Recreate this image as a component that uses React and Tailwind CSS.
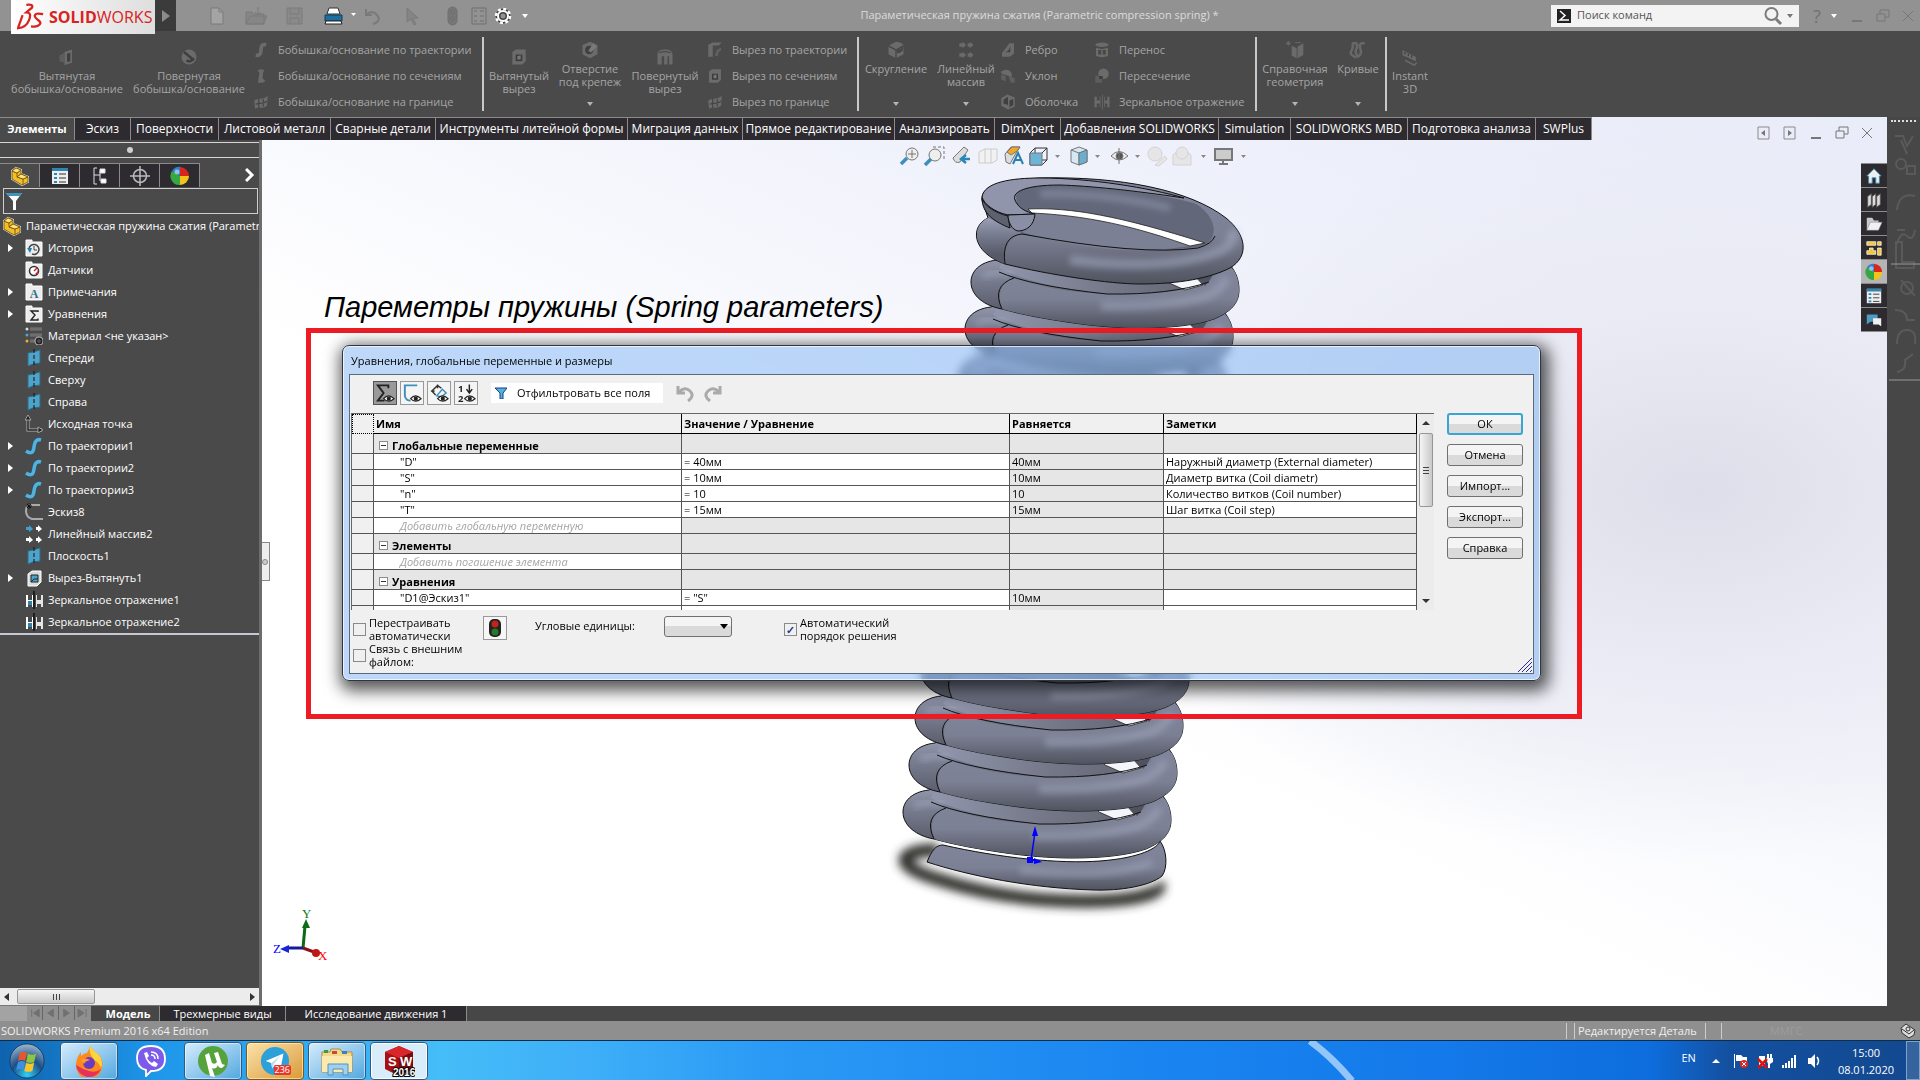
import clsx from "clsx";

const TABS = [
  { label: "Элементы", width: "w-[75px]", active: true },
  { label: "Эскиз", width: "w-[56px]" },
  { label: "Поверхности", width: "w-[88px]" },
  { label: "Листовой металл", width: "w-[112px]" },
  { label: "Сварные детали", width: "w-[105px]" },
  { label: "Инструменты литейной формы", width: "w-[192px]" },
  { label: "Миграция данных", width: "w-[115px]" },
  { label: "Прямое редактирование", width: "w-[152px]" },
  { label: "Анализировать", width: "w-[100px]" },
  { label: "DimXpert", width: "w-[66px]" },
  { label: "Добавления SOLIDWORKS", width: "w-[158px]" },
  { label: "Simulation", width: "w-[72px]" },
  { label: "SOLIDWORKS MBD", width: "w-[117px]" },
  { label: "Подготовка анализа", width: "w-[128px]" },
  { label: "SWPlus", width: "w-[56px]" },
];

const TREE = [
  { label: "История", icon: "history", open: true },
  { label: "Датчики", icon: "sensor" },
  { label: "Примечания", icon: "note", open: true },
  { label: "Уравнения", icon: "sigma", open: true },
  { label: "Материал <не указан>", icon: "material" },
  { label: "Спереди", icon: "plane" },
  { label: "Сверху", icon: "plane" },
  { label: "Справа", icon: "plane" },
  { label: "Исходная точка", icon: "origin" },
  { label: "По траектории1", icon: "sweep", open: true },
  { label: "По траектории2", icon: "sweep", open: true },
  { label: "По траектории3", icon: "sweep", open: true },
  { label: "Эскиз8", icon: "sketch" },
  { label: "Линейный массив2", icon: "pattern" },
  { label: "Плоскость1", icon: "plane" },
  { label: "Вырез-Вытянуть1", icon: "cut", open: true },
  { label: "Зеркальное отражение1", icon: "mirror" },
  { label: "Зеркальное отражение2", icon: "mirror" },
];

const ROWS = [
  { group: "Глобальные переменные" },
  { name: '"D"', value: "= 40мм", result: "40мм", note: "Наружный диаметр (External diameter)" },
  { name: '"S"', value: "= 10мм", result: "10мм", note: "Диаметр витка (Coil diametr)" },
  { name: '"n"', value: "= 10", result: "10", note: "Количество витков (Coil number)" },
  { name: '"T"', value: "= 15мм", result: "15мм", note: "Шаг витка (Coil step)" },
  { add: "Добавить глобальную переменную" },
  { group: "Элементы" },
  { add: "Добавить погашение элемента" },
  { group: "Уравнения" },
  { name: '"D1@Эскиз1"', value: '= "S"', result: "10мм", note: "" },
  { name: '"D2@Эскиз1"', value: '= "D"', result: "40мм", note: "" },
];

function Caret({ className = "text-white" }) {
  return (
    <svg viewBox="0 0 6 4" className={clsx("h-1 w-1.5 shrink-0", className)} fill="currentColor">
      <path d="M0 0h6L3 4z" />
    </svg>
  );
}

// Greyed out feature glyphs of the ribbon
const RIBBON_GLYPHS = {
  extrude: (
    <>
      <path d="M3 10l6-3v12l-6-2z" fill="#5d5d5d" />
      <path d="M9 6l9-3v16l-9 3z" />
      <path d="M12 8l4-1v10l-4 1z" fill="#3f3f3f" />
    </>
  ),
  revolve: (
    <>
      <circle cx="12" cy="12" r="9" />
      <path d="M6 6l12 10M9 16a5 5 0 0 0 8-3" stroke="#3f3f3f" strokeWidth="3" fill="none" />
    </>
  ),
  sweep: <path d="M5 19c6 1 7-3 7-8s2-7 7-6" stroke="#6b6b6b" strokeWidth="5" fill="none" />,
  loft: (
    <>
      <ellipse cx="12" cy="5" rx="4" ry="2" />
      <path d="M10 6h5l-1 9 4 4-4 2H8z" />
    </>
  ),
  boundary: (
    <>
      <path d="M3 10c5-4 10 0 18-6l-1 13c-6 5-12 1-16 4z" />
      <path d="M5 15c6-2 9 0 15-4M9 8v12M15 8v10" stroke="#444" strokeWidth="1.5" fill="none" />
    </>
  ),
  cut: (
    <>
      <path d="M4 6l4-3h12v14l-4 4H4z" />
      <path d="M8 9h8v8H8z" fill="#3c3c3c" />
      <path d="M10 11l4-1v5h-4z" fill="#777" />
    </>
  ),
  hole: (
    <>
      <path d="M12 2l9 4v11l-9 5-9-5V6z" />
      <circle cx="11" cy="12" r="5" fill="#404040" />
      <path d="M10 13l6-9 4 4-7 7z" fill="#7a7a7a" />
    </>
  ),
  draft: (
    <>
      <path d="M3 6q10-6 14 3v4L3 9z" />
      <path d="M3 10l6 2v7l-6-2zM12 11l9 4v6h-5z" fill="#5f5f5f" />
    </>
  ),
  shell: (
    <>
      <path d="M3 7l8-5 10 4v12l-9 4-9-5z" />
      <path d="M6 9l6-4v11l-6-2zM14 10l5-2v8l-5 3z" fill="#404040" />
    </>
  ),
  arch: (
    <>
      <path d="M3 21V9q0-6 9-6t9 6v12h-4V11h-2v10h-4V11H8v10z" />
      <path d="M5 7q7-3 14 0" stroke="#4a4a4a" strokeWidth="1.5" fill="none" />
    </>
  ),
  refGeometry: (
    <>
      <path d="M8 7l6 3v12l-6-3zM15 8l7-4v14l-7 4z" />
      <path d="M4 1v6M1 4h6M2 2l4 4M6 2L2 6M12 3h7" stroke="#6b6b6b" fill="none" />
    </>
  ),
  cutSweep: (
    <>
      <path d="M3 5l6-3h12l-4 4H9v15H3z" />
      <path d="M12 20q0-9 8-11v4q-4 1-4 7z" fill="#5f5f5f" />
    </>
  ),
  fillet: (
    <>
      <path d="M12 2q9 1 9 5v10l-9 5-9-5V7z" />
      <path d="M12 12v10M3 7l9 5 9-5" stroke="#444" strokeWidth="1.5" fill="none" />
      <path d="M13 12q6-1 8-5l-1 6q-3 3-7 3z" fill="#474747" />
    </>
  ),
  pattern: (
    <path d="M4 4h4V2l4 4-4 4V8H4zM14 4h3V2l4 4-4 4V8h-3zM4 16h4v-2l4 4-4 4v-2H4zM14 16h3v-2l4 4-4 4v-2h-3z" />
  ),
  rib: (
    <>
      <path d="M4 16L14 3h6v14l-6 4H4z" />
      <path d="M8 15q6-1 7-9v9z" fill="#424242" />
    </>
  ),
  wrap: (
    <>
      <ellipse cx="12" cy="5" rx="9" ry="3" />
      <path d="M4 9q8 3 16 0v11q-8 3-16 0z" />
      <path d="M7 12h4v6H7zM13 12h4v6h-4z" fill="#474747" />
    </>
  ),
  intersect: (
    <>
      <path d="M3 12h9v9H3z" fill="#5d5d5d" />
      <circle cx="14" cy="9" r="7" />
      <path d="M8 12h5v4H8z" fill="#3f3f3f" />
    </>
  ),
  mirror: <path d="M2 5h3v5h4V5h1v14H9v-5H5v5H2zM12 2h1v20h-1zM15 5h1v5h3V5h3v14h-3v-5h-3v5h-1z" />,
  curves: (
    <path d="M5 4h5q2 3 0 7t2 9q5-3 3-9t1-7h4M5 4q2 4-1 9t6 8" stroke="#686868" strokeWidth="3" fill="none" />
  ),
  instant: (
    <>
      <path d="M3 4l16 8v5L3 10z" />
      <path d="M6 6v3M10 8v3M14 10v3" stroke="#3f3f3f" strokeWidth="1.5" />
      <path d="M6 16l11 6 3-3" stroke="#686868" strokeWidth="2" fill="none" />
    </>
  ),
};

function Glyph({ name, className = "size-5" }) {
  return (
    <svg viewBox="0 0 24 24" className={clsx("shrink-0", className)} fill="#6b6b6b">
      {RIBBON_GLYPHS[name]}
    </svg>
  );
}

function BigButton({ glyph, lines, width, caret }) {
  return (
    <button
      type="button"
      className={clsx("flex shrink-0 flex-col items-center", width, caret ? "pt-[3px]" : "pt-2.5")}
    >
      <Glyph name={glyph} />
      <span className="mt-0.5 flex h-[26px] flex-col leading-[13px] whitespace-nowrap">
        {lines.map((l) => (
          <span key={l}>{l}</span>
        ))}
      </span>
      {caret && <Caret className="mt-3.5 text-[#b4b4b4]" />}
    </button>
  );
}

function ButtonColumn({ items, width }) {
  return (
    <div className={clsx("flex shrink-0 flex-col", width)}>
      {items.map(([glyph, label]) => (
        <button key={label} type="button" className="flex h-[26px] shrink-0 items-center gap-2 whitespace-nowrap">
          <Glyph name={glyph} className="size-[18px]" />
          {label}
        </button>
      ))}
    </div>
  );
}

function TitleBar() {
  return (
    <header className="relative z-10 flex h-[31px] items-center bg-[#929292] text-[11px]">
      <div className="ml-[11px] flex h-[34px] w-[144px] shrink-0 items-center gap-1 self-start bg-gradient-to-r from-white to-[#dedede] pl-1.5">
        <svg viewBox="0 0 30 30" className="h-[30px] w-[28px] shrink-0" fill="none" stroke="#d8231f" strokeWidth="2.4">
          <path d="M10 2q8-1 6 3l-6 5q6 0 3 8-3 8-12 9l5-14" />
          <path d="M28 12q-9-2-9 2c0 4 7 4 6 8q-2 4-10 3" />
        </svg>
        <span className="text-[16px] text-[#d8231f]">
          <b>SOLID</b>WORKS
        </span>
      </div>
      <button type="button" aria-label="Меню" className="flex h-[31px] w-[21px] shrink-0 items-center justify-center bg-[#3b3b3b]">
        <svg viewBox="0 0 8 12" className="h-3 w-2" fill="#8b8b8b">
          <path d="M0 0l8 6-8 6z" />
        </svg>
      </button>
      <div className="ml-8 flex shrink-0 items-center">
        <svg viewBox="0 0 220 20" className="h-5 w-[220px]" fill="none" stroke="#7a7a7a">
          <path d="M3 2h8l4 4v12H3z" fill="#a4a4a4" />
          <path d="M11 2v4h4" />
          <path d="M38 6h6l2 2h10v10H38zM38 18l4-8h17l-4 8z" fill="#868686" />
          <path d="M50 1v8m-3-3l3 3 3-3" />
          <path d="M79 2h15v16H79z" fill="#8a8a8a" />
          <path d="M82 2v6h9V2M82 18v-6h9v6" />
          <path d="M121 2h9l2 6h-13z" fill="#fff" stroke="#333" />
          <path d="M117 9h17v6h-17z" fill="#1e6fa0" stroke="#123c58" />
          <path d="M118 15h15l1 3h-17z" fill="#fff" stroke="#222" />
          <path d="M143 7h5l-2.500 3z" fill="#fff" stroke="none" />
          <path d="M158 3v6h6M158 9q6-6 11 0t-4 9" strokeWidth="2" />
          <path d="M199 2v14l4-3 3 6 2-1-3-6h5z" fill="#858585" />
        </svg>
        <svg viewBox="0 0 90 20" className="ml-1 h-5 w-[90px]" fill="none" stroke="#6f6f6f">
          <rect x="16" y="1" width="9" height="18" rx="4.500" fill="#777" />
          <circle cx="20.500" cy="6" r="2" />
          <circle cx="20.500" cy="13" r="2" />
          <path d="M40 2h14v16H40zM42 5h3M42 10h3M42 15h3M48 5h4M48 10h4M48 15h4" />
          <circle cx="71" cy="10" r="5" stroke="#444" strokeWidth="5" />
          <circle cx="71" cy="10" r="7" stroke="#fff" strokeWidth="2.500" strokeDasharray="3 2.500" />
          <circle cx="71" cy="10" r="5" stroke="#fff" strokeWidth="2" />
        </svg>
        <svg viewBox="0 0 6 4" className="h-1 w-1.5 shrink-0" fill="#fff">
          <path d="M0 0h6L3 4z" />
        </svg>
      </div>
      <h1 className="min-w-0 flex-1 truncate text-center text-[#dcdcdc]">
        Параметическая пружина сжатия (Parametric compression spring) *
      </h1>
      <div className="flex h-[22px] w-[248px] shrink-0 items-center bg-[#f3f3f3] px-1.5">
        <svg viewBox="0 0 14 14" className="size-3.5 shrink-0 bg-[#222]" fill="none" stroke="#fff" strokeWidth="1.500">
          <path d="M3 2l5 4.500L3 11h9" />
        </svg>
        <input
          aria-label="Поиск команд"
          placeholder="Поиск команд"
          className="ml-1.5 min-w-0 flex-1 bg-transparent outline-none placeholder:text-[#555]"
        />
        <svg viewBox="0 0 20 20" className="size-5 shrink-0" fill="none" stroke="#7b7b7b" strokeWidth="2">
          <circle cx="8.500" cy="8" r="6" />
          <path d="M13 13l5 5" strokeWidth="3" />
        </svg>
        <Caret className="ml-1 text-[#777]" />
      </div>
      <div className="flex w-[121px] shrink-0 items-center text-[#717171]">
        <button type="button" className="ml-3 w-3 text-[18px] leading-none">?</button>
        <Caret className="ml-2 text-white" />
        <WindowButtons />
      </div>
    </header>
  );
}

function WindowButtons() {
  return (
    <svg viewBox="0 0 66 14" className="mr-1 ml-auto h-3.5 w-[66px] shrink-0" fill="none" stroke="#777">
      <path d="M2 12h10" strokeWidth="2" />
      <path d="M27 5h8v7h-8zM30 5V1h9v7h-4" />
      <path d="M53 2l10 10M63 2L53 12" />
    </svg>
  );
}

function Ribbon() {
  return (
    <div className="flex h-[86px] overflow-hidden bg-[#4a4a4a] py-1.5 text-[11px] text-[#a5a5a5]">
      <div className="flex w-[482px] shrink-0 pl-1.5">
        <BigButton glyph="extrude" width="w-[122px]" lines={["Вытянутая", "бобышка/основание"]} />
        <BigButton glyph="revolve" width="w-[122px]" lines={["Повернутая", "бобышка/основание"]} />
        <ButtonColumn
          width="w-[230px] pl-0.5"
          items={[
            ["sweep", "Бобышка/основание по траектории"],
            ["loft", "Бобышка/основание по сечениям"],
            ["boundary", "Бобышка/основание на границе"],
          ]}
        />
      </div>
      <div className="flex w-[375px] shrink-0 border-l-2 border-[#c9c9c9]">
        <BigButton glyph="cut" width="w-[70px]" lines={["Вытянутый", "вырез"]} />
        <BigButton glyph="hole" width="w-[72px]" lines={["Отверстие", "под крепеж"]} caret />
        <BigButton glyph="arch" width="w-[78px]" lines={["Повернутый", "вырез"]} />
        <ButtonColumn
          width="w-[150px] pl-0.5"
          items={[
            ["cutSweep", "Вырез по траектории"],
            ["cut", "Вырез по сечениям"],
            ["boundary", "Вырез по границе"],
          ]}
        />
      </div>
      <div className="flex w-[398px] shrink-0 border-l-2 border-[#c9c9c9]">
        <BigButton glyph="fillet" width="w-[74px]" lines={["Скругление"]} caret />
        <BigButton glyph="pattern" width="w-[66px]" lines={["Линейный", "массив"]} caret />
        <ButtonColumn
          width="w-[92px]"
          items={[
            ["rib", "Ребро"],
            ["draft", "Уклон"],
            ["shell", "Оболочка"],
          ]}
        />
        <ButtonColumn
          width="w-[160px] pl-0.5"
          items={[
            ["wrap", "Перенос"],
            ["intersect", "Пересечение"],
            ["mirror", "Зеркальное отражение"],
          ]}
        />
      </div>
      <div className="flex w-[130px] shrink-0 border-l-2 border-[#c9c9c9]">
        <BigButton glyph="refGeometry" width="w-[76px]" lines={["Справочная", "геометрия"]} caret />
        <BigButton glyph="curves" width="w-[50px]" lines={["Кривые"]} caret />
      </div>
      <div className="flex border-l-2 border-[#c9c9c9]">
        <BigButton glyph="instant" width="w-[46px]" lines={["Instant", "3D"]} />
      </div>
    </div>
  );
}

function TabRow() {
  return (
    <div className="flex h-[23px] items-stretch">
      <nav className="flex text-[12px] text-white">
        {TABS.map((t) => (
          <button
            key={t.label}
            type="button"
            className={clsx(
              "shrink-0 border-t border-r border-[#8b8b8b] leading-5 whitespace-nowrap",
              t.width,
              t.active ? "bg-[#4a4a4a] text-[11px] font-bold" : "bg-[#2d2b30]"
            )}
          >
            {t.label}
          </button>
        ))}
      </nav>
      <div className="ml-auto flex items-center gap-3 pt-2 pr-2">
        <svg viewBox="0 0 40 14" className="h-3.5 w-10" fill="none" stroke="#8b8b8b">
          <path d="M1 1h11v12H1zM27 1h11v12H27z" />
          <path d="M8 4v6L4 7zM31 4v6l4-3z" fill="#777" stroke="none" />
        </svg>
        <WindowButtons />
      </div>
    </div>
  );
}

function PartIcon({ className = "size-5" }) {
  return (
    <svg viewBox="0 0 20 20" className={clsx("shrink-0", className)} stroke="#6d4c00" strokeWidth="0.800">
      <path d="M2 5l4-3 5 2v4l7 3v5l-6 3-10-6z" fill="#f0bd2b" stroke="#ddd" strokeWidth="2" />
      <path d="M2 5l4-3 5 2v4l7 3v5l-6 3-10-6z" fill="#f0bd2b" />
      <path d="M2 5l5 2v4l6 2v6M7 7l4-3M7 11l4-3M13 13l5-2" fill="none" />
      <path d="M2 5l4-3 5 2-4 3zM7 11l4-3 7 3-5 2z" fill="#ffe27a" />
    </svg>
  );
}

function Folder({ children }) {
  return (
    <>
      <path d="M1 3V1h6v2h10v14H1z" fill="#ececec" stroke="#fff" />
      {children}
    </>
  );
}

const TREE_ICONS = {
  history: (
    <Folder>
      <path d="M4 10a5 5 0 1 1 3 5" fill="none" stroke="#444" strokeWidth="1.500" />
      <path d="M9 7v4h3" fill="none" stroke="#444" />
      <path d="M2 9h5l-2 5z" fill="#1f83b8" />
    </Folder>
  ),
  sensor: (
    <Folder>
      <circle cx="9" cy="10" r="4.500" fill="#fff" stroke="#333" strokeWidth="1.500" />
      <path d="M9 10l3-3" stroke="#d22" strokeWidth="1.500" />
      <path d="M10 13l3-3v3z" fill="#d22" />
    </Folder>
  ),
  note: (
    <Folder>
      <text x="9" y="15" textAnchor="middle" fontSize="12" fontWeight="bold" fontFamily="Liberation Serif, serif" fill="#2a7390">
        A
      </text>
    </Folder>
  ),
  sigma: (
    <Folder>
      <path d="M13 7V6H6l4 4-4 5h7v-1.500" fill="none" stroke="#222" strokeWidth="1.400" />
    </Folder>
  ),
  material: (
    <>
      <circle cx="2" cy="2" r="1.500" fill="#ddd" />
      <circle cx="2" cy="8" r="1.500" fill="#4ba6d5" />
      <circle cx="2" cy="14" r="1.500" fill="#f0b020" />
      <path d="M5 2h12M5 8h12M5 14h5" stroke="#aaa" strokeWidth="2.500" />
      <path d="M5 2h12M5 8h12M5 14h5" stroke="#333" />
      <circle cx="14" cy="14" r="3" fill="none" stroke="#bbb" strokeWidth="3" />
      <circle cx="14" cy="14" r="2.500" fill="none" stroke="#222" strokeWidth="2" />
    </>
  ),
  plane: (
    <>
      <path d="M3 4l5-1 7-2v13l-7 1-5 2z" fill="#4fa3c9" stroke="#2b6d8e" />
      <path d="M9 0v18" stroke="#111" strokeDasharray="4 2" />
    </>
  ),
  origin: (
    <>
      <path d="M3 2v13h14" fill="none" stroke="#b5b5b5" strokeWidth="3" />
      <path d="M3 3v12h12" fill="none" stroke="#222" strokeWidth="1.500" />
      <path d="M0 5l3-5 3 5zM13 12l5 3-5 3z" fill="#222" stroke="#b5b5b5" strokeWidth="0.800" />
    </>
  ),
  sweep: (
    <>
      <path d="M1 14q7 5 8-4t7-7" fill="none" stroke="#1d5573" strokeWidth="5" />
      <path d="M1 14q7 5 8-4t7-7" fill="none" stroke="#56b0d8" strokeWidth="3.500" />
    </>
  ),
  sketch: (
    <>
      <path d="M15 2H5Q1 2 1 8t6 8h11" fill="none" stroke="#aaa" strokeWidth="2" />
      <path d="M4 0v6M1 3h6M2 1l4 4M6 1L2 5" stroke="#111" />
    </>
  ),
  pattern: (
    <>
      <path d="M1 2h3V0l4 4-4 3V5H1z" fill="#3fa0cf" />
      <path d="M11 2h2V0l4 4-4 3V5h-2zM1 13h3v-2l4 4-4 3v-2H1zM11 13h2v-2l4 4-4 3v-2h-2z" fill="#fff" />
    </>
  ),
  cut: (
    <>
      <path d="M3 5l4-3h9v11l-4 4H3z" fill="#dadada" stroke="#fff" />
      <path d="M6 6h7v7H6z" fill="#4fa3c9" stroke="#222" />
      <path d="M6 13l3-3h4" fill="none" stroke="#222" />
    </>
  ),
  mirror: (
    <>
      <path d="M1 4h2v5h4V4h1v12H7v-3H3v3H1z" fill="#fff" />
      <path d="M3 10h4v4H3z" fill="#2d86b0" />
      <path d="M9 0v18" stroke="#111" strokeWidth="1.500" />
      <path d="M11 4h1v5h4V4h2v12h-2v-3h-4v3h-1z" fill="#e5e5e5" />
    </>
  ),
};

function ColorBall({ className = "size-5" }) {
  return (
    <svg viewBox="0 0 20 20" className={className}>
      <path d="M10 10L2 5a9 9 0 0 1 9-4z" fill="#2f7fd0" />
      <path d="M10 10V1a9 9 0 0 1 9 9z" fill="#d8261c" />
      <path d="M10 10h9a9 9 0 0 1-9 9z" fill="#f2c318" />
      <path d="M10 10v9A9 9 0 0 1 2 5z" fill="#36a843" />
      <circle cx="7" cy="6" r="2.500" fill="#fff" opacity="0.500" />
    </svg>
  );
}

function FeaturePanel() {
  const tab = "flex h-6 w-10 shrink-0 items-center justify-center border-t border-r border-[#8b8b8b]";
  return (
    <aside className="flex w-[262px] shrink-0 flex-col overflow-hidden border-r-3 border-[#6d6d6d] bg-[#4a4a4a] text-[11px] text-white">
      <div className="mt-0.5 flex h-4 shrink-0 items-center justify-center border-y border-[#d6d6d6]">
        <span className="size-1.5 rounded-full bg-[#d0d0d0]" />
      </div>
      <div className="mt-[5px] flex shrink-0 items-center">
        <button type="button" aria-label="Дерево" className={tab}>
          <PartIcon />
        </button>
        <button type="button" aria-label="Свойства" className={clsx(tab, "bg-[#2d2b30]")}>
          <svg viewBox="0 0 18 18" className="size-[18px]">
            <path d="M1 1h16v16H1z" fill="#eee" />
            <path d="M1 1h16v3H1z" fill="#2f86b5" />
            <path d="M3 7h3M3 11h3M3 15h3" stroke="#2f86b5" strokeWidth="2" />
            <path d="M8 7h7M8 11h7M8 15h7" stroke="#333" />
          </svg>
        </button>
        <button type="button" aria-label="Конфигурации" className={clsx(tab, "bg-[#2d2b30]")}>
          <svg viewBox="0 0 18 18" className="size-[18px]" stroke="#ddd" fill="none">
            <path d="M6 1H3v16h3M3 8h6M9 4v10" />
            <path d="M9 2h5v4H9zM10 12h5v4h-5z" fill="#fff" />
          </svg>
        </button>
        <button type="button" aria-label="DimXpert" className={clsx(tab, "bg-[#2d2b30]")}>
          <svg viewBox="0 0 20 20" className="size-5" stroke="#bbb" strokeWidth="1.500" fill="none">
            <circle cx="10" cy="10" r="6.500" />
            <path d="M10 0v20M0 10h20" />
          </svg>
        </button>
        <button type="button" aria-label="Отображение" className={clsx(tab, "bg-[#2d2b30]")}>
          <ColorBall />
        </button>
        <svg viewBox="0 0 10 14" className="mr-1 ml-auto h-3.5 w-2.5" fill="none" stroke="#fff" strokeWidth="3">
          <path d="M1 1l6 6-6 6" />
        </svg>
      </div>
      <label className="mt-px mr-px ml-[3px] flex h-[26px] shrink-0 items-center border border-[#cfcfcf] pl-0.5">
        <svg viewBox="0 0 16 18" className="h-[18px] w-4" fill="#fff">
          <path d="M0 1h16l-6 8v9H7V9z" />
          <path d="M0 1h16l-2 3H2z" fill="#3f94bd" />
        </svg>
        <input aria-label="Фильтр" className="min-w-0 flex-1 bg-transparent outline-none" />
      </label>
      <div className="mt-px flex h-[22px] shrink-0 items-center gap-1 pl-0.5 whitespace-nowrap">
        <PartIcon />
        <span>Параметическая пружина сжатия (Parametric compression spring)</span>
      </div>
      <ul className="border-b-2 border-[#c8c8d4]">
        {TREE.map((n) => (
          <li key={n.label} className="flex h-[22px] items-center pl-2 whitespace-nowrap">
            <span className="w-[17px] shrink-0">
              {n.open && (
                <svg viewBox="0 0 5 8" className="h-2 w-[5px]" fill="#fff">
                  <path d="M0 0l5 4-5 4z" />
                </svg>
              )}
            </span>
            <svg viewBox="0 0 18 18" className="size-[18px] shrink-0">
              {TREE_ICONS[n.icon]}
            </svg>
            <button type="button" className="ml-[5px]">
              {n.label}
            </button>
          </li>
        ))}
      </ul>
      <div className="mt-auto flex h-[18px] shrink-0 items-center border-b border-[#777] bg-[#ececec] px-1">
        <svg viewBox="0 0 5 8" className="h-2 w-[5px]" fill="#333">
          <path d="M5 0L0 4l5 4z" />
        </svg>
        <span className="ml-2 flex h-[15px] w-[78px] items-center justify-center gap-0.5 rounded-xs border border-[#979797] bg-gradient-to-b from-[#f5f5f5] to-[#c9c9c9]">
          <i className="h-1.5 w-px bg-[#444]" />
          <i className="h-1.5 w-px bg-[#444]" />
          <i className="h-1.5 w-px bg-[#444]" />
        </span>
        <svg viewBox="0 0 5 8" className="ml-auto h-2 w-[5px]" fill="#333">
          <path d="M0 0l5 4-5 4z" />
        </svg>
      </div>
    </aside>
  );
}

// One full turn of the wire. The origin is the leftmost point of the turn.
function Coil({ x, y }) {
  return (
    <g transform={`translate(${x} ${y})`}>
      <path
        d="M26-22C8-20 0-10 0 0C0 14 14 24 31 27C52 33 76 37 96 40C122 44 148 46 169 46C200 46 226 43 243 37C259 30 268 22 268 8C268 0 266-7 262-13L250-30H40z"
        fill="url(#wireEnd)"
        stroke="#111"
      />
      <path d="M28-14C60 2 100 8 136 12C160 14 210 11 238 0L250-28H36z" fill="url(#wireInner)" />
      <path
        d="M31 27C26 12 30 0 43-4C80 8 110 12 150 12C190 12 222 8 240-2C248-8 250-14 250-18L262-13C266-7 268 0 268 8C268 22 259 30 243 37C226 43 200 46 169 46C148 46 122 44 96 40C76 37 52 33 31 27z"
        fill="url(#wireFront)"
      />
      <path d="M12 -4Q18-12 40-8" stroke="#a6aac2" strokeWidth="7" fill="none" opacity="0.500" filter="url(#soft)" />
      <path d="M130 24Q195 26 236 14Q252 6 256-4" stroke="#a9aec6" strokeWidth="9" fill="none" opacity="0.450" filter="url(#soft)" />
      <path d="M196 0L214 8L232 3L224-6H190z" fill="#f4f5fb" stroke="#222" strokeWidth="0.800" />
      <path d="M224-6L234 4Q240-2 246-16z" fill="#50535f" />
      <path d="M28-10Q60 4 136 12Q200 13 238 0M43-4Q20 4 31 27" fill="none" stroke="#111" />
    </g>
  );
}

function Spring() {
  return (
    <svg className="absolute inset-0 size-full" aria-hidden="true">
      <defs>
        <linearGradient id="wireFront" x1="0" y1="0" x2="0" y2="1">
          <stop offset="0.200" stopColor="#80849a" />
          <stop offset="0.550" stopColor="#7c8094" />
          <stop offset="1" stopColor="#50535f" />
        </linearGradient>
        <linearGradient id="wireEnd" x1="0" y1="0" x2="0" y2="1">
          <stop offset="0" stopColor="#9b9fb6" />
          <stop offset="0.350" stopColor="#797d90" />
          <stop offset="0.800" stopColor="#565967" />
        </linearGradient>
        <linearGradient id="wireInner" x1="0" y1="0" x2="1" y2="0">
          <stop offset="0" stopColor="#9296ad" />
          <stop offset="0.500" stopColor="#747888" />
          <stop offset="1" stopColor="#5e616f" />
        </linearGradient>
        <filter id="soft" x="-50%" y="-50%" width="200%" height="200%">
          <feGaussianBlur stdDeviation="3" />
        </filter>
        <filter id="shade" x="-20%" y="-50%" width="140%" height="200%">
          <feGaussianBlur stdDeviation="5" />
        </filter>
      </defs>
      <g transform="translate(-262 -140)">
        {/* ground shadow */}
        <path
          d="M938 850C900 850 890 864 934 878C1000 900 1060 902 1098 901C1140 900 1164 892 1158 884"
          fill="none"
          stroke="#2e2e2c"
          strokeWidth="13"
          filter="url(#shade)"
        />
        <path
          d="M927 862C932 850 936 845 943 845C1000 858 1060 864 1100 861C1140 858 1158 848 1160 841C1167 850 1168 868 1162 876C1150 886 1120 891 1093 890C1030 888 970 876 927 862z"
          fill="url(#wireFront)"
          stroke="#111"
        />
        <path d="M1020 870Q1110 880 1152 862" stroke="#a3a7be" strokeWidth="8" fill="none" opacity="0.500" filter="url(#soft)" />
        <Coil x={903} y={812} />
        <Coil x={909} y={765} />
        <Coil x={915} y={718} />
        <Coil x={921} y={671} />
        <Coil x={959} y={377} />
        <Coil x={965} y={329} />
        <Coil x={971} y={282} />

        {/* top turn with the ground end face */}
        <path
          d="M988 218C970 226 971 252 1005 264C1050 275 1110 284 1140 284C1180 284 1210 278 1230 268C1250 256 1246 234 1226 218C1190 190 1120 176 1040 178C1000 180 981 186 982 200z"
          fill="url(#wireFront)"
          stroke="#111"
        />
        <path d="M988 218C971 226 972 251 1005 264C1003 250 1008 238 1022 234z" fill="url(#wireEnd)" />
        <path d="M1016 196C1018 186 1040 184 1080 186C1130 190 1180 198 1196 204C1216 216 1220 238 1203 246C1170 252 1110 250 1021 234z" fill="#63677a" />
        <path d="M1030 212L1080 214Q1140 224 1200 244Q1150 254 1100 248T1022 232z" fill="#7c8094" />
        <path d="M1028 209C1070 207 1120 216 1205 243L1190 246C1150 232 1100 216 1032 213z" fill="#fff" stroke="#222" strokeWidth="0.800" />
        <path d="M1005 264Q1001 236 1022 234Q1140 256 1198 248Q1212 244 1215 236" fill="none" stroke="#111" />
        <path d="M1070 260Q1170 272 1222 250Q1236 242 1232 230" stroke="#a9aec6" strokeWidth="10" fill="none" opacity="0.500" filter="url(#soft)" />
        <path d="M1040 194Q1100 192 1170 208" stroke="#9ea2b8" strokeWidth="8" fill="none" opacity="0.450" filter="url(#soft)" />
        <path
          d="M982 197C984 182 1012 178 1040 178C1090 178 1150 188 1184 198C1130 190 1090 186 1060 185C1020 185 1012 194 1015 200C1018 208 1026 212 1035 214L1008 215C994 212 984 204 982 197z"
          fill="#9195ac"
          stroke="#111"
        />
        <path d="M982 198C984 206 996 213 1008 216L1010 228C995 222 982 214 982 198z" fill="#5d606e" stroke="#111" />
        <path d="M1008 215L1035 214C1034 226 1026 231 1018 231C1012 230 1008 222 1008 215z" fill="#8b8fa5" stroke="#111" />

        {/* part origin */}
        <path d="M1031 860L1035 832M1031 860L1040 861" stroke="#00f" strokeWidth="1.500" />
        <path d="M1035 826l3 10h-6zM1042 862l-8-4v6zM1027 857h6v6h-6z" fill="#00f" />

        {/* view triad */}
        <path d="M303 948L305 926" stroke="#0b6b17" strokeWidth="3" />
        <path d="M306 919l4 9h-8z" fill="#0b6b17" />
        <path d="M303 948L288 948" stroke="#161b9c" strokeWidth="3" />
        <path d="M280 949l9-4v8z" fill="#1c24d8" />
        <path d="M303 948L314 952" stroke="#8c1212" strokeWidth="3" />
        <circle cx="316" cy="953" r="4" fill="#c01818" />
        <g fontFamily="Liberation Serif, serif" fontSize="13">
          <text x="302" y="918" fill="#0b7b17">Y</text>
          <text x="273" y="953" fill="#00f">Z</text>
          <text x="318" y="960" fill="#f00">X</text>
        </g>
      </g>
    </svg>
  );
}

function ViewToolbar() {
  return (
    <div className="absolute top-[5px] left-1/2 -translate-x-1/2">
      <svg viewBox="0 0 352 22" className="h-[22px] w-[352px]" fill="none" stroke="#777">
        <g>
          <circle cx="13" cy="9" r="6" fill="#eee" />
          <path d="M13 5v8M9 9h8" />
          <path d="M8 13l-6 6" stroke="#3e8fba" strokeWidth="3.500" />
          <path d="M34 2h11v13" strokeDasharray="3 2" />
          <circle cx="36" cy="10" r="6" fill="#eee" />
          <path d="M32 14l-6 6" stroke="#3e8fba" strokeWidth="3.500" />
          <path d="M54 13L65 2l4 3-8 12q-5 2-7-4z" fill="#ddd" />
          <path d="M71 14h-8m4-4l-5 4 5 4" stroke="#2a86b6" strokeWidth="2.500" />
        </g>
        <path d="M80 7l6-3h12v11l-5 3H80zM86 4v14M92 4v14" stroke="#ccc" fill="#f1f1f1" />
        <path d="M106 9l6-7h9l-4 6-6 11-4-2z" fill="#ddd" />
        <path d="M108 7l5-5h8l-3 4-6 4z" fill="#f5a623" />
        <path d="M114 19l5-11 5 11m-8-4h6" stroke="#2a7fae" strokeWidth="2" />
        <path d="M131 8l5-5h12v12l-5 5h-12zM136 3v12h12M143 8l5-5" stroke="#333" />
        <path d="M131 8h12v12h-12z" fill="#6db4d8" />
        <path d="M172 5l8-3 8 3v12l-8 3-8-3z" fill="#d6e8f2" />
        <path d="M172 5l8 3 8-3M180 8v12" />
        <path d="M180 8l8-3v12l-8 3z" fill="#6aaed0" />
        <path d="M212 11q8-9 17 0q-9 8-17 0z" fill="#eee" />
        <circle cx="220.500" cy="11" r="3.500" fill="#555" />
        <path d="M220 3v16" />
        <g stroke="#d3d3d3" fill="#e6e6e6">
          <circle cx="256" cy="9" r="7" />
          <path d="M256 20l10-9 2 3-8 7zM274 20V10l9-7 9 7v10z" />
          <circle cx="283" cy="8" r="6" />
        </g>
        <path d="M316 4h17v11h-17z" fill="#ccc" strokeWidth="2" />
        <path d="M324 15v4m-4 0h9" strokeWidth="2" />
        <path d="M156 10h5l-2.500 3zM196 10h5l-2.500 3zM236 10h5l-2.500 3zM302 10h5l-2.500 3zM342 10h5l-2.500 3z" fill="#888" stroke="none" />
      </svg>
    </div>
  );
}

function TaskPane() {
  const items = [
    <path d="M2 10l8-8 8 8h-2v8h-4v-6H8v6H4v-8z" fill="#eee" stroke="#3d8ab0" />,
    <path d="M3 6l4-3v12l-4 3zM8 6l4-3v12l-4 3zM13 6l4-3v12l-4 3z" fill="#ddd" stroke="#555" />,
    <g>
      <path d="M2 17V3h6l2 3h5v3" fill="#c9c9c9" />
      <path d="M2 17L6 8h13l-4 9z" fill="#f0f0f0" stroke="#777" strokeWidth="0.500" />
    </g>,
    <path d="M2 3h10v4H2zM14 3h4v4h-4zM2 16v-3h3v-3h4v3h3v4H2zM14 10h4v8h-4z" fill="#f2c733" stroke="#fff" strokeWidth="0.800" />,
    null,
    <g>
      <path d="M2 2h16v16H2z" fill="#eee" />
      <path d="M2 2h16v3H2zM4 7h3v2H4zM4 11h3v2H4zM4 15h3v2H4z" fill="#2f86b5" />
      <path d="M9 8h7M9 12h7M9 16h7" stroke="#333" />
    </g>,
    <g>
      <path d="M2 4h12v8H6l-4 3z" fill="#4e9cc4" />
      <path d="M9 8h9v9l-3-2H9z" fill="#f0f0f0" />
    </g>,
  ];
  return (
    <div className="absolute top-[23px] right-0 w-[26px] border-t border-[#8b8b8b]">
      {items.map((it, i) => (
        <button
          key={i}
          type="button"
          aria-label={`Панель ${i + 1}`}
          className={clsx(
            "flex h-6 w-full items-center justify-center border-b border-[#8b8b8b]",
            it ? "bg-[#2d2b30]" : "bg-[#b5b5b5]"
          )}
        >
          {it ? (
            <svg viewBox="0 0 20 20" className="size-[18px]">
              {it}
            </svg>
          ) : (
            <ColorBall className="size-[18px]" />
          )}
        </button>
      ))}
    </div>
  );
}

const EYE = (
  <>
    <path d="M9 16q5-6 11 0q-6 5-11 0z" fill="#fff" stroke="#222" strokeWidth="1.200" />
    <circle cx="14.500" cy="16" r="2.200" fill="#222" />
  </>
);

function DialogToolbar() {
  const modes = [
    <path d="M14 5V2H3l6 8-6 8h7" fill="none" stroke="#222" strokeWidth="2" />,
    <path d="M16 2H3v11q1 5 6 5" fill="none" stroke="#3e8fba" strokeWidth="2" />,
    <g fill="none" stroke="#333" strokeWidth="1.500">
      <path d="M3 8l6-6 4 3M3 8l4 4M2 8h4M9 1v4" />
      <path d="M8 13l6-7 4 4-5 4z" stroke="#3e8fba" />
    </g>,
    <g>
      <text x="2" y="9" fontSize="10" fontWeight="bold" fill="#222">1</text>
      <text x="2" y="19" fontSize="10" fontWeight="bold" fill="#222">2</text>
      <path d="M14 1v8m-3-3l3 4 3-4" fill="none" stroke="#222" strokeWidth="1.500" />
    </g>,
  ];
  return (
    <div className="flex h-6 items-center gap-[3px] pl-[22px]">
      {modes.map((m, i) => (
        <button
          key={i}
          type="button"
          aria-label={`Вид ${i + 1}`}
          className={clsx(
            "flex size-6 items-center justify-center border",
            i === 0 ? "border-[#555] bg-[#9a9a9a]" : "border-[#999] bg-[#f4f4f4]"
          )}
        >
          <svg viewBox="0 0 21 20" className="size-5">
            {m}
            {EYE}
          </svg>
        </button>
      ))}
      <label className="ml-2.5 flex h-5 w-[172px] items-center gap-2.5 bg-white pl-1">
        <svg viewBox="0 0 12 12" className="size-3">
          <path d="M0 1h12L8 6v6H5V6z" fill="#4fb5d8" stroke="#1b3a8c" />
        </svg>
        <input
          aria-label="Фильтр полей"
          defaultValue="Отфильтровать все поля"
          className="w-[140px] bg-transparent text-[11px] outline-none"
        />
      </label>
      <svg viewBox="0 0 48 18" className="ml-2.5 h-[18px] w-12" fill="none" stroke="#aaa" strokeWidth="3">
        <path d="M2 2v7h7M3 8q6-6 11-1t-2 10M44 2v7h-7M43 8q-6-6-11-1t2 10" />
      </svg>
    </div>
  );
}

function EquationTable() {
  const cell = "overflow-hidden border-r border-b border-[#555] p-0 whitespace-nowrap";
  return (
    <div className="flex h-[197px] w-[1083px] overflow-hidden border-t border-l border-[#666]">
      <div className="w-[1065px] shrink-0 overflow-hidden">
        <table className="w-full table-fixed border-separate border-spacing-0 text-left text-[11px]">
          <colgroup>
            <col className="w-[22px]" />
            <col className="w-[308px]" />
            <col className="w-[328px]" />
            <col className="w-[154px]" />
            <col className="w-[253px]" />
          </colgroup>
          <thead>
            <tr className="h-5 leading-[19px]">
              <th className="border border-dotted border-black p-0" />
              {["Имя", "Значение / Уравнение", "Равняется", "Заметки"].map((h) => (
                <th key={h} className="border-r border-b border-black p-0 pl-0.5 font-bold">
                  {h}
                </th>
              ))}
            </tr>
          </thead>
          <tbody>
            {ROWS.map((r, i) => {
              if (r.group)
                return (
                  <tr key={i} className="h-5 bg-[#e6e6e6] leading-[15px]">
                    <td className={clsx(cell, "bg-[#f0f0f0]")} />
                    <td className={clsx(cell, "pt-1")}>
                      <span className="flex items-center gap-1 pl-[5px] font-bold">
                        <button
                          type="button"
                          aria-label="Свернуть"
                          className="flex size-[9px] items-center justify-center border border-[#8c8c8c] bg-white"
                        >
                          <i className="h-px w-[5px] bg-[#333]" />
                        </button>
                        {r.group}
                      </span>
                    </td>
                    <td className={cell} />
                    <td className={cell} />
                    <td className={cell} />
                  </tr>
                );
              const grey = r.add ? "bg-[#e6e6e6]" : "bg-white";
              return (
                <tr key={i} className="h-4 leading-[15px]">
                  <td className={clsx(cell, "bg-[#f0f0f0]")} />
                  <td className={clsx(cell, "bg-white pl-[26px]", r.add && "text-[#a5a5a5] italic")}>
                    {r.add || r.name}
                  </td>
                  <td className={clsx(cell, grey, "pl-0.5")}>{r.value}</td>
                  <td className={clsx(cell, "bg-[#e6e6e6] pl-0.5")}>{r.result}</td>
                  <td className={clsx(cell, grey, "pl-0.5")}>{r.note}</td>
                </tr>
              );
            })}
          </tbody>
        </table>
      </div>
      <div className="flex flex-1 flex-col items-center bg-[#ececec] pt-[7px] pb-[7px]">
        <svg viewBox="0 0 8 4" className="h-1 w-2" fill="#333">
          <path d="M0 4l4-4 4 4z" />
        </svg>
        <span className="mt-2 flex h-[74px] w-3.5 flex-col items-center justify-center gap-0.5 rounded-xs border border-[#979797] bg-gradient-to-r from-[#f5f5f5] to-[#c9c9c9]">
          <i className="h-px w-1.5 bg-[#444]" />
          <i className="h-px w-1.5 bg-[#444]" />
          <i className="h-px w-1.5 bg-[#444]" />
        </span>
        <svg viewBox="0 0 8 4" className="mt-auto h-1 w-2" fill="#333">
          <path d="M0 0h8L4 4z" />
        </svg>
      </div>
    </div>
  );
}

function Check({ lines, checked }) {
  return (
    <label className="flex items-center gap-[3px] leading-[13px]">
      <input
        type="checkbox"
        defaultChecked={checked}
        className="size-[13px] shrink-0 appearance-none border border-[#8a8a8a] bg-[#f0f0f0] text-[11px] leading-[11px] text-[#2a3f8f] checked:before:block checked:before:text-center checked:before:font-bold checked:before:content-['✓']"
      />
      <span className="flex flex-col">
        {lines.map((l) => (
          <span key={l}>{l}</span>
        ))}
      </span>
    </label>
  );
}

function EquationDialog() {
  return (
    <section className="absolute top-[205px] left-[80px] w-[1199px] rounded-[7px] border border-[#30363f] bg-[#86b8f4]/55 p-1.5 pt-0 text-[11px] text-black shadow-[3px_5px_16px_5px_rgba(0,0,0,0.65)] ring-1 ring-white/70 backdrop-blur-[4px] ring-inset">
      <h2 className="h-7 pl-0.5 leading-[30px]">Уравнения, глобальные переменные и размеры</h2>
      <div className="relative h-[300px] border border-[#5b6b7c] bg-[#f0f0f0] pt-1.5 pl-px">
        <DialogToolbar />
        <div className="mt-2 flex">
          <EquationTable />
          <div className="ml-[13px] flex w-[76px] flex-col gap-[9px]">
            {["ОК", "Отмена", "Импорт...", "Экспорт...", "Справка"].map((b, i) => (
              <button
                key={b}
                type="button"
                className={clsx(
                  "h-[22px] rounded-[3px] border bg-gradient-to-b from-[#f4f4f4] from-50% to-[#dadada] to-50%",
                  i === 0 ? "border-2 border-[#3aa5d0]" : "border-[#707070]"
                )}
              >
                {b}
              </button>
            ))}
          </div>
        </div>
        <div className="mt-1.5 flex items-start">
          <div className="w-[132px] pl-0.5">
            <Check lines={["Перестраивать", "автоматически"]} />
            <Check lines={["Связь с внешним", "файлом:"]} />
          </div>
          <button type="button" aria-label="Перестроить" className="flex size-6 items-center justify-center border border-[#999] bg-[#f6f6f6]">
            <svg viewBox="0 0 12 18" className="h-[18px] w-3">
              <rect width="12" height="18" rx="5" fill="#222" />
              <circle cx="6" cy="5" r="3.500" fill="#c4221c" />
              <circle cx="6" cy="13" r="3.500" fill="#247a2a" />
            </svg>
          </button>
          <label htmlFor="units" className="ml-7 w-[129px] pt-0.5">
            Угловые единицы:
          </label>
          <div className="relative flex items-center">
            <select
              id="units"
              className="h-[21px] w-[68px] appearance-none rounded-[3px] border border-[#707070] bg-gradient-to-b from-[#f4f4f4] from-50% to-[#dadada] to-50%"
            >
              <option />
            </select>
            <svg viewBox="0 0 8 5" className="pointer-events-none absolute right-1 h-[5px] w-2">
              <path d="M0 0h8L4 5z" />
            </svg>
          </div>
          <div className="ml-[52px]">
            <Check checked lines={["Автоматический", "порядок решения"]} />
          </div>
        </div>
        <svg viewBox="0 0 14 14" className="absolute right-px bottom-px size-3.5" stroke="#2a2f8f" fill="none">
          <path d="M0 14L14 0M4 14L14 4M8 14l6-6M12 14l2-2" />
        </svg>
      </div>
    </section>
  );
}

function Viewport() {
  return (
    <main className="relative min-w-0 flex-1 overflow-hidden">
      <Spring />
      <ViewToolbar />
      <TaskPane />
      <div className="absolute top-[402px] -left-0.5 flex h-[39px] w-2.5 items-center justify-center border border-[#888] bg-[#eee]">
        <i className="size-1.5 rounded-full border border-[#888] bg-[#ccc]" />
      </div>
      <p className="absolute top-[147px] left-[62px] font-['Liberation_Sans',sans-serif] text-[29px] leading-10 whitespace-nowrap text-black italic">
        Пареметры пружины (Spring parameters)
      </p>
      <div className="absolute top-[188px] left-[44px] h-[391px] w-[1276px] border-5 border-[#ed1c24]" />
      <EquationDialog />
    </main>
  );
}

function SideTools() {
  return (
    <aside className="w-[33px] shrink-0 bg-[#474747] pt-[3px]">
      <div className="mx-1 border-t-2 border-dotted border-[#ddd]" />
      <svg viewBox="0 0 33 262" className="h-[262px] w-full" fill="none" stroke="#5a5a5a" strokeWidth="2">
        <path d="M8 14h8l4 10 6-10M14 18l6 14" />
        <circle cx="14" cy="42" r="5" />
        <path d="M20 44h8v8h-8zM10 88q2-18 18-14M10 122q4-14 10-8t8-6M10 108h8M9 120v26h18v-6H15v-20z" />
        <circle cx="20" cy="166" r="6" />
        <path d="M14 158l14 16M8 188q12 0 12 10h8M10 222q0-14 10-14t8 14M10 250q10-2 8-12l8-6" />
        <path d="M4 142h29M2 258h31" stroke="#999" strokeWidth="1" />
      </svg>
    </aside>
  );
}

function BottomBars() {
  return (
    <>
      <div className="flex h-[15px] bg-[#474747] text-[11px] leading-[14px] text-white">
        <span className="w-[27px] bg-[#a3a3a3]" />
        <span className="flex w-16 divide-x divide-[#666] bg-[#8f8f8f]">
          {["M5 3v8M13 3L7 7l6 4z", "M11 3L5 7l6 4z", "M5 3l6 4-6 4z", "M11 3v8M3 3l6 4-6 4z"].map((d) => (
            <svg key={d} viewBox="0 0 16 14" className="h-3.5 w-4" fill="#707070" stroke="#707070">
              <path d={d} />
            </svg>
          ))}
        </span>
        <button type="button" className="w-[69px] border-r border-[#8b8b8b] pl-1.5 font-bold">Модель</button>
        <button type="button" className="w-[126px] border-r border-[#8b8b8b] bg-[#2d2b30]">Трехмерные виды</button>
        <button type="button" className="w-[181px] border-r border-[#8b8b8b] bg-[#2d2b30]">Исследование движения 1</button>
      </div>
      <div className="flex h-[19px] items-center bg-[#8f8f8f] text-[11px] leading-[19px] text-[#f0f0f0]">
        <span className="pl-px">SOLIDWORKS Premium 2016 x64 Edition</span>
        <span className="ml-auto h-4 w-[9px] border-x border-[#ccc]" />
        <span className="w-[130px] pl-[3px] whitespace-nowrap">Редактируется Деталь</span>
        <span className="h-4 w-[17px] border-x border-[#ccc]" />
        <span className="w-[178px] pl-12 text-[#9c9c9c]">ММГС</span>
        <svg viewBox="0 0 16 16" className="mr-1 size-4" stroke="#333" fill="#ddd">
          <path d="M1 5l5-4 9 6-1 5-5 3-7-5z" />
          <path d="M2 6l7 5 5-4" fill="none" />
          <circle cx="8" cy="6" r="2" />
        </svg>
      </div>
    </>
  );
}

function Taskbar() {
  const frame = "flex h-[38px] w-[58px] shrink-0 items-center justify-center rounded-sm border";
  const glass = "border-[#2c5c86] bg-gradient-to-br from-[#d5ecfb] to-[#4ea8e0] ring-1 ring-white/50 ring-inset";
  return (
    <footer className="h-10 border-t border-[#0d2f4e] text-[11px] text-white">
      <div className="relative flex h-full items-center overflow-hidden bg-[linear-gradient(90deg,#0f62ad_0%,#1e96ea_8%,#45bdf8_23%,#3fb0f8_30%,#2a9af5_40%,#1a85f0_60%,#1479ea_75%,#0d6ddd_86%,#1450a0_90%,#12488e_100%)]">
        <svg viewBox="0 0 100 40" className="absolute left-[1290px] h-10 w-[100px]" fill="none">
          <path d="M20 0Q42 16 62 40" stroke="#a9d2fa" strokeWidth="7" opacity="0.850" />
        </svg>
        <button type="button" aria-label="Пуск" className="mr-1.5 flex w-[54px] shrink-0 justify-center">
          <svg viewBox="0 0 40 40" className="size-9">
            <defs>
              <radialGradient id="orb" cx="0.500" cy="0.900" r="0.900">
                <stop offset="0" stopColor="#2fd0f8" />
                <stop offset="0.500" stopColor="#1d4f86" />
                <stop offset="1" stopColor="#9fb8cf" />
              </radialGradient>
            </defs>
            <circle cx="20" cy="20" r="19" fill="url(#orb)" stroke="#123a5c" />
            <path d="M12 11q4-2 8 0l-2 9q-4-2-8 0z" fill="#e8562a" />
            <path d="M21 12q5 2 9 0l-2 9q-4 2-9 0z" fill="#8cc63e" />
            <path d="M10 21q4-2 8 0l-2 9q-4-2-8 0z" fill="#3d8fe0" />
            <path d="M19 22q4 2 9 0l-2 9q-5 2-9 0z" fill="#f8c62c" />
          </svg>
        </button>
        <div className="flex gap-1">
          <button type="button" aria-label="Firefox" className={clsx(frame, glass)}>
            <svg viewBox="0 0 32 32" className="size-8">
              <path d="M17 1q3 5 8 8 6 6 4 13a13 13 0 0 1-26-2q0-7 5-13v4q3-3 6-3 2-3 3-7z" fill="#ff8a1c" />
              <path d="M17 1q3 5 8 8 6 7 3 14-2-6-7-8-6-8-4-14z" fill="#ffd43a" />
              <path d="M3 20a13 13 0 0 0 25 4q-5 4-12 2T3 20z" fill="#e8305c" />
              <circle cx="16" cy="18" r="6" fill="#6a3bc2" />
              <path d="M8 15q4-3 9 0-5 1-6 4z" fill="#ff9b2f" />
            </svg>
          </button>
          <button type="button" aria-label="Viber" className={clsx(frame, "border-transparent")}>
            <svg viewBox="0 0 32 32" className="size-8">
              <path d="M16 1q14 0 14 13 0 12-14 12l-5 5v-6Q2 23 2 13 2 1 16 1z" fill="#7d5bea" stroke="#fff" strokeWidth="1.800" />
              <path d="M9 8l3-1 2 4-2 2q2 4 5 5l2-2 4 3-2 3q-9-1-12-14z" fill="#fff" />
              <path d="M16 10q4 0 4 4M16 7q7 0 7 7" stroke="#fff" fill="none" strokeWidth="1.500" />
            </svg>
          </button>
          <button type="button" aria-label="uTorrent" className={clsx(frame, glass)}>
            <svg viewBox="0 0 32 32" className="size-8">
              <circle cx="16" cy="16" r="15" fill="#57a33b" />
              <path d="M8 10l4-2 3 10q3 2 5-1L17 8l4-1 4 12 3 1-3 3q-4 0-4-3-2 5-6 3l3 9-5-1z" fill="#fff" />
            </svg>
          </button>
          <button
            type="button"
            aria-label="Telegram"
            className={clsx(frame, "relative border-[#7d5a12] bg-gradient-to-br from-[#fbe3a8] to-[#d99a35] ring-1 ring-white/50 ring-inset")}
          >
            <svg viewBox="0 0 32 32" className="size-[30px]">
              <circle cx="16" cy="16" r="15" fill="#2da0d9" />
              <path d="M6 16L25 8l-3 16-6-4-3 4-1-6z" fill="#fff" />
              <path d="M12 18l10-8-7 9-2 5z" fill="#c4dbe8" />
            </svg>
            <span className="absolute right-3 bottom-1 rounded-xs bg-[#e8352e] px-px text-[9px] leading-[10px]">236</span>
          </button>
          <button type="button" aria-label="Проводник" className={clsx(frame, glass)}>
            <svg viewBox="0 0 34 30" className="h-[30px] w-[34px]">
              <path d="M2 6h8l1-3h9l2 3h10v20H2z" fill="#f3d98a" stroke="#b08d3c" />
              <path d="M2 10h30v16H2z" fill="#fbe9ae" />
              <path d="M4 4h4v3H4z" fill="#3c9c3c" />
              <path d="M12 5h5v3h-5z" fill="#c64a3a" />
              <path d="M22 5h5v3h-5z" fill="#3d7fc0" />
              <path d="M8 29V18h20v11h-5v-6H13v6z" fill="#9fd0ee" stroke="#4f93c4" />
            </svg>
          </button>
          <button type="button" aria-label="SOLIDWORKS" className={clsx(frame, "relative border-[#2c5c86] bg-[#d9ecfa] ring-1 ring-white ring-inset")}>
            <svg viewBox="0 0 32 32" className="size-8">
              <path d="M16 1l14 6v17l-14 7-14-7V7z" fill="#a80f14" />
              <path d="M16 1l14 6-14 6L2 7z" fill="#d8262a" />
              <path d="M16 13v18l14-7V7z" fill="#7b0a0e" />
              <g fontFamily="Liberation Sans, sans-serif" fontWeight="bold" fill="#fff">
                <text x="5" y="21" fontSize="13">S</text>
                <text x="17" y="21" fontSize="13">W</text>
                <text x="10" y="31" fontSize="10" stroke="#000" strokeWidth="2" paintOrder="stroke">2016</text>
              </g>
            </svg>
          </button>
        </div>
        <div className="ml-auto flex h-full items-center">
          <span className="mb-1">EN</span>
          <svg viewBox="0 0 8 4" className="ml-4 h-1 w-2" fill="#fff">
            <path d="M0 4l4-4 4 4z" />
          </svg>
          <svg viewBox="0 0 90 16" className="ml-3 h-4 w-[90px]" fill="#fff">
            <path d="M2 1h1v14H2zM4 2h5l2 2h4v6h-4L9 8H4z" />
            <circle cx="12" cy="11" r="4" fill="#dc2a22" />
            <path d="M10 9l4 4m0-4l-4 4" stroke="#fff" />
            <path d="M27 3h6v10h-6zM34 5h1V1h2v4h1V1h2v4h1v4l-3 2v4h-2v-4z" />
            <path d="M26 6l9 9m0-9l-9 9" stroke="#e01010" strokeWidth="2.500" />
            <path d="M50 12h2v3h-2zM53 10h2v5h-2zM56 8h2v7h-2zM59 5h2v10h-2zM62 2h2v13h-2z" />
            <path d="M76 5h3l4-4v14l-4-4h-3z" />
            <path d="M85 4q3 4 0 8" fill="none" stroke="#fff" strokeWidth="1.500" />
          </svg>
          <time className="mr-3 ml-4 flex flex-col text-center leading-[17px]">
            <span>15:00</span>
            <span>08.01.2020</span>
          </time>
          <span className="h-full w-3.5 border border-[#7fa3c8] bg-white/15" />
        </div>
      </div>
    </footer>
  );
}

export default function App() {
  return (
    <div className="flex h-screen flex-col overflow-hidden bg-[#4a4a4a] font-['Open_Sans','Noto_Sans',sans-serif]">
      <TitleBar />
      <Ribbon />
      <div className="flex min-h-0 flex-1">
        <div className="flex min-w-0 flex-1 flex-col bg-white bg-[radial-gradient(ellipse_32%_42%_at_90%_42%,#dddee9_0%,#e9eaf3_45%,transparent_100%),linear-gradient(205deg,#e9ecf9_0%,#eff1fb_25%,#fff_55%)]">
          <TabRow />
          <div className="flex min-h-0 flex-1">
            <FeaturePanel />
            <Viewport />
          </div>
        </div>
        <SideTools />
      </div>
      <BottomBars />
      <Taskbar />
    </div>
  );
}
